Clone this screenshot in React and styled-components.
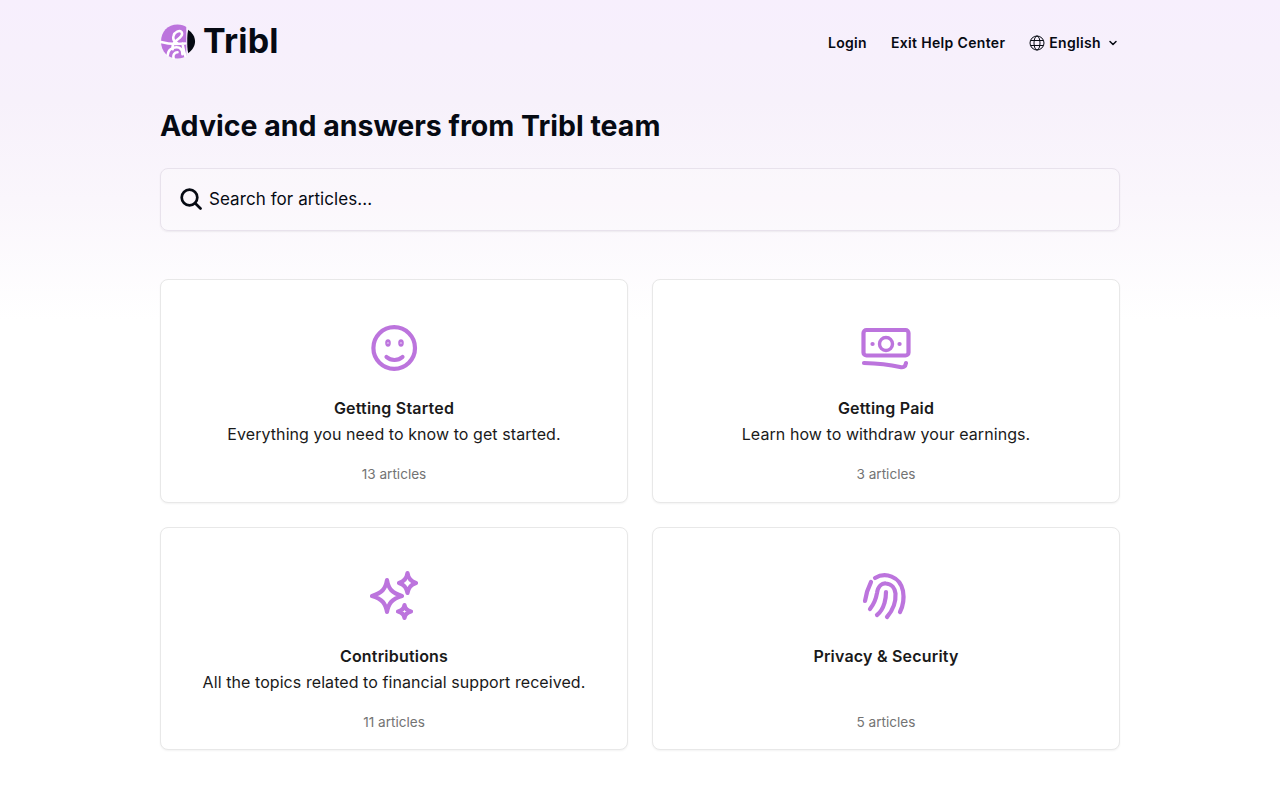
import React from "react";
import styled, { createGlobalStyle } from "styled-components";
import { ChevronDown } from "lucide-react";

const GlobalStyle = createGlobalStyle`
    html, body {
        margin: 0;
        padding: 0;
        background: #fff;
    }
    * {
        box-sizing: border-box;
    }
`;

const Page = styled.div`
    min-height: 800px;
    font-family: Inter, "Liberation Sans", sans-serif;
    color: #1a1a1a;
    background: linear-gradient(180deg, #f7effd 0px, #f7f1fb 100px, #faf6fc 200px, #ffffff 320px);
`;

const Wrap = styled.div`
    width: 960px;
    margin: 0 auto;
`;

const Header = styled.header`
    display: flex;
    align-items: center;
    justify-content: space-between;
    height: 86px;
`;

const Logo = styled.div`
    display: flex;
    align-items: center;
    gap: 6px;
    height: 36px;
    margin-bottom: 4px;
`;

const LogoWord = styled.span`
    font-size: 34px;
    font-weight: 700;
    line-height: 36px;
    letter-spacing: 0.2px;
    color: #060a13;
`;

const Nav = styled.nav`
    display: flex;
    align-items: center;
    gap: 24px;
`;

const NavLink = styled.a`
    display: flex;
    align-items: center;
    font-size: 14px;
    font-weight: 600;
    line-height: 20px;
    letter-spacing: 0.33px;
    color: #060a13;
`;

const GlobeIcon = styled.svg`
    width: 16px;
    height: 16px;
    margin-right: 4px;
`;

const Caret = styled(ChevronDown)`
    width: 12px;
    height: 12px;
    margin-left: 6px;
    margin-right: 1px;
`;

const Title = styled.h1`
    margin: 0;
    padding-top: 22px;
    font-size: 28.5px;
    font-weight: 700;
    line-height: 36px;
    color: #060a13;
`;

const SearchBox = styled.div`
    display: flex;
    align-items: center;
    gap: 7px;
    height: 63px;
    margin-top: 24px;
    padding: 0 19px 2px;
    border: 1px solid #e8e2ec;
    border-radius: 8px;
    background: rgba(255, 255, 255, 0.2);
    box-shadow: 0 1px 2px rgba(0, 0, 0, 0.06);
    font-size: 17px;
    letter-spacing: 0.07px;
    color: #060a13;
`;

const SearchIcon = styled.svg`
    width: 22px;
    height: 22px;
    flex: none;
`;

const Grid = styled.div`
    display: grid;
    grid-template-columns: 1fr 1fr;
    grid-auto-rows: 223.5px;
    gap: 24px;
    margin-top: 48px;
`;

const Card = styled.a`
    display: flex;
    flex-direction: column;
    align-items: center;
    padding: 41px 20px 0;
    border: 1px solid #e8e8e8;
    border-radius: 8px;
    background: #fff;
    box-shadow: 0 1px 2px rgba(0, 0, 0, 0.05);
    text-align: center;
`;

const CardIcon = styled.svg`
    display: block;
    width: 56px;
    height: 56px;
    fill: none;
    stroke: #bc74dd;
    stroke-width: 4.2;
    stroke-linecap: round;
    stroke-linejoin: round;
`;

const CardTitle = styled.div`
    margin-top: 18px;
    font-size: 16px;
    font-weight: 600;
    line-height: 26px;
    letter-spacing: 0.2px;
    color: #1a1a1a;
`;

const CardText = styled.div`
    height: 26px;
    font-size: 16px;
    line-height: 26px;
    letter-spacing: 0.07px;
    color: #1a1a1a;
`;

const CardCount = styled.div`
    margin-top: 17px;
    font-size: 13.6px;
    line-height: 20px;
    color: #737373;
`;

const TriblMark = () => (
    <svg width="37" height="35" viewBox="0 0 38 36">
        <path d="M18 0.500C8 0.500 1 8 1 18s7 17.500 17 17.500c4 0 7-1 9-2.500V3c-2-1.500-5-2.500-9-2.500z" fill="#bc74dd" />
        <path d="M29 6c4 3 7 7 7 12s-3 9-7 12c-1-4-1-8-1-12s0-8 1-12z" fill="#060a13" />
        <path
            d="M1 18.500c7 2 15 2.500 25 1.500M18 20c-4-2-5-5-4-8 1-4 6-6 8-4 2 3-1 6-4 8-4 3-6 6-5 10M23 20c1 5 2 9 3 13M8 32c0-5 4-8 9-8 4 0 6 3 6 7M14 35c-1-3 1-6 4-6"
            fill="none"
            stroke="#fff"
            strokeWidth="2.600"
            strokeLinecap="round"
        />
    </svg>
);

const Globe = () => (
    <GlobeIcon viewBox="0 0 16 16" fill="none" stroke="#060a13" strokeWidth="1">
        <circle cx="8" cy="8" r="7" />
        <ellipse cx="8" cy="8" rx="3" ry="7" />
        <path d="M1.500 5.500h13M1.500 10.500h13" />
    </GlobeIcon>
);

const Magnifier = () => (
    <SearchIcon viewBox="0 0 22 22" fill="none" stroke="#060a13" strokeWidth="2.700" strokeLinecap="round">
        <circle cx="9.500" cy="9.500" r="7.800" />
        <path d="M15.200 15.200L20.500 20.500" />
    </SearchIcon>
);

const Smile = () => (
    <CardIcon viewBox="0 0 56 56">
        <circle cx="28.200" cy="27" r="20.800" />
        <path d="M20.500 36c4.500 4 11.500 4 16 0" />
        <ellipse cx="22" cy="22" rx="0.700" ry="1.600" />
        <ellipse cx="35" cy="22" rx="0.700" ry="1.600" />
    </CardIcon>
);

const Money = () => (
    <CardIcon viewBox="0 0 56 56">
        <rect x="5.500" y="9" width="45" height="25.500" rx="3" />
        <circle cx="28" cy="23" r="6.500" strokeWidth="3.400" />
        <path d="M14.500 23h.1M41.500 23h.1" />
        <path d="M6 42c12 .3 25 1.500 36 4 3 .7 5.500 0 6-4" />
    </CardIcon>
);

const Sparkles = () => (
    <CardIcon viewBox="0 0 56 56">
        <path d="M21 11c1.500 9 5 13 15 16-10 3-13.500 7-15 16-1.500-9-5-13-15-16 10-3 13.500-7 15-16z" />
        <path d="M41.500 4c.6 5 2.500 8 8.500 10-6 2-7.900 5-8.500 10-.6-5-2.500-8-8.500-10 6-2 7.900-5 8.500-10z" />
        <path d="M38.500 36c.5 3.500 2 5.500 6.500 6.500-4.500 1-6 3-6.500 6.500-.5-3.500-2-5.500-6.500-6.500 4.500-1 6-3 6.500-6.500z" />
    </CardIcon>
);

const Fingerprint = () => (
    <CardIcon viewBox="0 0 56 56">
        <path d="M17 9c10-6 25-2 28 13 1.200 7 .5 14-3 21" />
        <path d="M13 13c-3 6-5 12-6 19" />
        <path d="M12 40c4-5 6-10 7-16 1-7 5-10 9-9.500 6 .5 9 5 9.500 10 .5 8-2 16-8.500 23.500" />
        <path d="M19 46c4-3 6-7 7.500-12 1.200-4 1.500-7 1.500-11" />
    </CardIcon>
);

const categories = [
    { icon: Smile, title: "Getting Started", text: "Everything you need to know to get started.", count: "13 articles" },
    { icon: Money, title: "Getting Paid", text: "Learn how to withdraw your earnings.", count: "3 articles" },
    { icon: Sparkles, title: "Contributions", text: "All the topics related to financial support received.", count: "11 articles" },
    { icon: Fingerprint, title: "Privacy & Security", text: "", count: "5 articles" },
];

export default function App() {
    return (
        <Page>
            <GlobalStyle />
            <Wrap>
                <Header>
                    <Logo>
                        <TriblMark />
                        <LogoWord>Tribl</LogoWord>
                    </Logo>
                    <Nav>
                        <NavLink>Login</NavLink>
                        <NavLink>Exit Help Center</NavLink>
                        <NavLink>
                            <Globe />
                            English
                            <Caret strokeWidth={3} />
                        </NavLink>
                    </Nav>
                </Header>
                <Title>Advice and answers from Tribl team</Title>
                <SearchBox>
                    <Magnifier />
                    Search for articles...
                </SearchBox>
                <Grid>
                    {categories.map(({ icon: Icon, title, text, count }) => (
                        <Card key={title}>
                            <Icon />
                            <CardTitle>{title}</CardTitle>
                            <CardText>{text}</CardText>
                            <CardCount>{count}</CardCount>
                        </Card>
                    ))}
                </Grid>
            </Wrap>
        </Page>
    );
}
